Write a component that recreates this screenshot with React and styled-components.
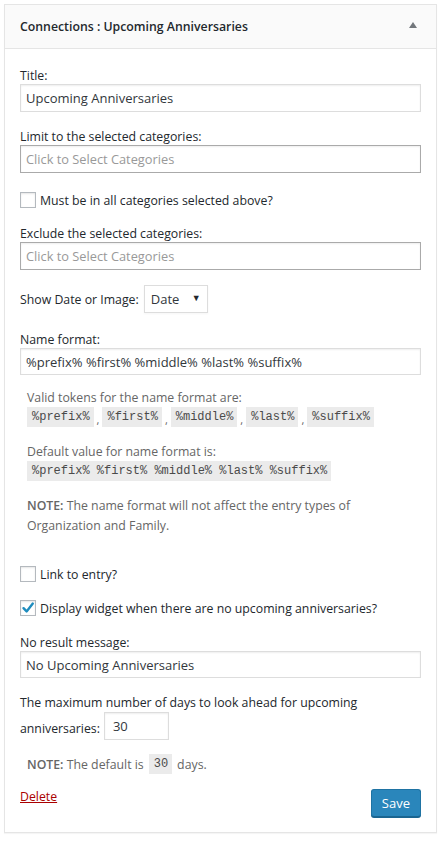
import React from 'react';
import styled, {createGlobalStyle} from 'styled-components';

const GlobalStyle = createGlobalStyle`
  html, body {
    margin: 0;
    padding: 0;
    background: #ffffff;
  }
  body {
    font-family: "Open Sans", "Noto Sans", sans-serif;
    font-size: 12.3px;
    color: #23282d;
  }
  * {
    box-sizing: border-box;
  }
`;

const Page = styled.div`
  padding: 4px 4px 7px 4px;
  width: 441px;
`;

const Widget = styled.div`
  border: 1px solid #e5e5e5;
  background: #ffffff;
  box-shadow: 0 1px 1px rgba(0, 0, 0, 0.04);
`;

const WidgetTop = styled.div`
  height: 44px;
  display: flex;
  align-items: center;
  justify-content: space-between;
  padding: 0 19px 0 15px;
  background: #fafafa;
  border-bottom: 1px solid #e5e5e5;
`;

const WidgetTitle = styled.h3`
  margin: 0;
  font-size: 12.3px;
  font-weight: 600;
  color: #23282d;
`;

const Toggle = styled.span`
  width: 0;
  height: 0;
  border-left: 4px solid transparent;
  border-right: 4px solid transparent;
  border-bottom: 6px solid #72777c;
  margin-top: -3px;
`;

const Inside = styled.div`
  padding: 0 15px 15px;
`;

const Field = styled.div`
  margin-top: ${p => p.gap || 16}px;
`;

const Label = styled.label`
  display: block;
  line-height: 17px;
  color: #23282d;
`;

const TextInput = styled.input`
  display: block;
  width: 100%;
  height: ${p => (p.short ? 27 : 28)}px;
  padding: 0 5px;
  border: 1px solid ${p => (p.dark ? '#aaaaaa' : '#dddddd')};
  box-shadow: inset 0 1px 2px rgba(0, 0, 0, 0.07);
  font-family: inherit;
  font-size: 13px;
  color: #32373c;
  background: #fff;
  outline: none;

  &::placeholder {
    color: #999;
    font-size: 12.8px;
  }
`;

const CheckRow = styled.label`
  display: flex;
  align-items: center;
  gap: 4px;
  height: 18px;
  color: #23282d;
`;

const Box = styled.span`
  width: 16px;
  height: 16px;
  border: 1px solid #b4b9be;
  background: #fff;
  box-shadow: inset 0 1px 2px rgba(0, 0, 0, 0.1);
  display: flex;
  align-items: center;
  justify-content: center;
  flex: none;
`;

const InlineRow = styled.div`
  display: flex;
  align-items: center;
  gap: ${p => p.gap || 5}px;
`;

const Select = styled.div`
  width: 64px;
  height: 28px;
  border: 1px solid #ddd;
  display: flex;
  align-items: center;
  justify-content: space-between;
  padding: 0 6px 0 6px;
  font-size: 13px;
  color: #32373c;
  box-shadow: 0 1px 2px rgba(0, 0, 0, 0.04);
`;

const SelectArrow = styled.span`
  font-size: 9px;
  color: #23282d;
  margin-top: -4px;
`;

const Description = styled.div`
  padding-left: 7px;
  color: #666;
`;

const DescLine = styled.div`
  margin-top: ${p => p.gap || 0}px;
  line-height: ${p => p.lh || 18}px;
`;

const CodeRow = styled.div`
  display: flex;
  align-items: flex-end;
  height: 20px;
`;

const Code = styled.code`
  display: inline-block;
  background: #ebebeb;
  font-family: "Liberation Mono", "DejaVu Sans Mono", monospace;
  font-size: 12px;
  line-height: 20px;
  height: 20px;
  padding: 0 4px 0 5px;
  color: #4a4a4a;
`;

const Comma = styled.span`
  padding: 0 3px;
  color: #666;
  align-self: center;
  margin-top: 4px;
  font-size: 11px;
`;

const Strong = styled.strong`
  font-weight: 600;
`;

const TextLine = styled.div`
  line-height: 18px;
  padding-top: ${p => p.nudge || 0}px;
`;

const DaysInput = styled.input`
  width: 65px;
  height: 28px;
  padding: 0 8px;
  border: 1px solid #ddd;
  box-shadow: inset 0 1px 2px rgba(0, 0, 0, 0.07);
  font-family: inherit;
  font-size: 13px;
  color: #32373c;
  outline: none;
`;

const Note = styled.div`
  padding-left: 7px;
  color: #666;
  display: flex;
  align-items: center;
  gap: 5px;
  height: 20px;
`;

const Footer = styled.div`
  margin-top: 14px;
  display: flex;
  justify-content: space-between;
  align-items: flex-start;
`;

const DeleteLink = styled.a`
  color: #a00;
  text-decoration: underline;
  line-height: 18px;
  cursor: pointer;
`;

const SaveButton = styled.button`
  height: 28px;
  padding: 0 10px 1px;
  margin-top: 1px;
  background: #2a86bb;
  border: 1px solid #1f73a3;
  border-bottom-color: #1a6591;
  border-radius: 3px;
  box-shadow: 0 1px 0 #1a6591;
  color: #fff;
  font-family: inherit;
  font-size: 13px;
`;

const Check = () => (
  <svg width="14" height="14" viewBox="0 0 14 14">
    <path
      d="M2.5 7.2 L5.6 10.4 L11.8 2.6"
      fill="none"
      stroke="#1e8cbe"
      strokeWidth="2.4"
      strokeLinecap="round"
      strokeLinejoin="round"
    />
  </svg>
);

const tokens = ['%prefix%', '%first%', '%middle%', '%last%', '%suffix%'];

const App = () => {
  return (
    <Page>
      <GlobalStyle />
      <Widget>
        <WidgetTop>
          <WidgetTitle>Connections : Upcoming Anniversaries</WidgetTitle>
          <Toggle />
        </WidgetTop>
        <Inside>
          <Field gap={18}>
            <Label>Title:</Label>
            <TextInput defaultValue="Upcoming Anniversaries" />
          </Field>
          <Field gap={16}>
            <Label>Limit to the selected categories:</Label>
            <TextInput dark placeholder="Click to Select Categories" />
          </Field>
          <Field gap={18}>
            <CheckRow>
              <Box />
              Must be in all categories selected above?
            </CheckRow>
          </Field>
          <Field gap={16}>
            <Label>Exclude the selected categories:</Label>
            <TextInput dark placeholder="Click to Select Categories" />
          </Field>
          <Field gap={15}>
            <InlineRow>
              <span>Show Date or Image:</span>
              <Select>
                Date
                <SelectArrow>▼</SelectArrow>
              </Select>
            </InlineRow>
          </Field>
          <Field gap={18}>
            <Label>Name format:</Label>
            <TextInput short defaultValue="%prefix% %first% %middle% %last% %suffix%" />
          </Field>
          <Field gap={14}>
            <Description>
              <DescLine>Valid tokens for the name format are:</DescLine>
              <CodeRow>
                {tokens.map((t, i) => (
                  <React.Fragment key={t}>
                    <Code>{t}</Code>
                    {i < tokens.length - 1 && <Comma>,</Comma>}
                  </React.Fragment>
                ))}
              </CodeRow>
              <DescLine gap={16}>Default value for name format is:</DescLine>
              <CodeRow>
                <Code>%prefix% %first% %middle% %last% %suffix%</Code>
              </CodeRow>
              <DescLine gap={15} lh={19.5}>
                <Strong>NOTE:</Strong> The name format will not affect the entry types of
                <br />
                Organization and Family.
              </DescLine>
            </Description>
          </Field>
          <Field gap={30}>
            <CheckRow>
              <Box />
              Link to entry?
            </CheckRow>
          </Field>
          <Field gap={16}>
            <CheckRow>
              <Box>
                <Check />
              </Box>
              Display widget when there are no upcoming anniversaries?
            </CheckRow>
          </Field>
          <Field gap={17}>
            <Label>No result message:</Label>
            <TextInput short defaultValue="No Upcoming Anniversaries" />
          </Field>
          <Field gap={16}>
            <TextLine>The maximum number of days to look ahead for upcoming</TextLine>
            <InlineRow gap={4}>
              <TextLine nudge={5}>anniversaries:</TextLine>
              <DaysInput defaultValue="30" />
            </InlineRow>
          </Field>
          <Field gap={14}>
            <Note>
              <span>
                <Strong>NOTE:</Strong> The default is
              </span>
              <Code>30</Code>
              <span>days.</span>
            </Note>
          </Field>
          <Footer>
            <DeleteLink>Delete</DeleteLink>
            <SaveButton>Save</SaveButton>
          </Footer>
        </Inside>
      </Widget>
    </Page>
  );
};

export default App;
